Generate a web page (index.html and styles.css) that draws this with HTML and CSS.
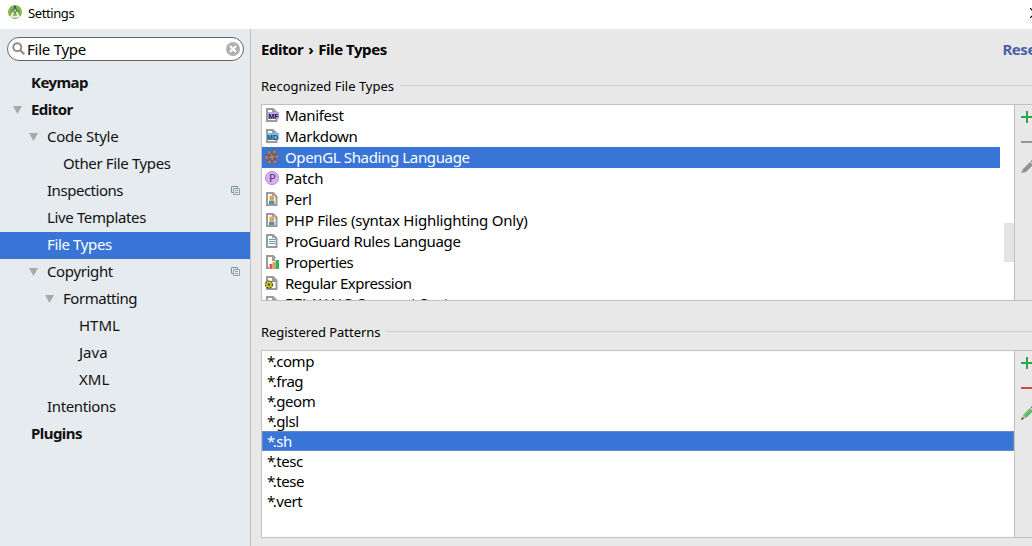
FILE: index.html
```html
<!DOCTYPE html>
<html lang="en">
<head>
<meta charset="utf-8">
<title>Settings</title>
<link rel="stylesheet" href="styles.css">
</head>
<body>
<svg width="0" height="0" class="defs">
  <defs>
    <symbol id="page" viewBox="0 0 16 16"><path fill="#fff" stroke="#9b9b9b" stroke-width="2" d="M3 2h6l3.500 3.500V14H3z"/><path fill="#9b9b9b" d="M8 2l5 5H8z"/></symbol>
    <symbol id="copy" viewBox="0 0 10 10"><path d="M2 6.500H.5v-6h6V2" fill="none" stroke="#5f9dc0"/><path d="M2.500 2.500h6v6h-6zM4 4.500h3M4 6.500h3" fill="none" stroke="#9b9b9b"/></symbol>
    <symbol id="script" viewBox="0 0 16 16"><use href="#page"/><path fill="#fff" d="M4 5h7v8H4z"/><path fill="#f0ad55" d="M5.500 4.500h4.500V10H5.500z"/><path fill="#4d94bd" d="M5 10h5.500v3H5z"/><path fill="#6d7480" d="M6 6.500h1v1H6zM8.500 6.500h1v1h-1z"/></symbol>
    <symbol id="plus" viewBox="0 0 12 12"><path d="M0 6h12M6 0v12" stroke="#29a846" stroke-width="2"/></symbol>
  </defs>
</svg>
<div class="window">
  <header class="titlebar">
    <svg class="logo" viewBox="0 0 16 16"><circle cx="8" cy="7" r="7" fill="#82b84c"/><path d="M3 6q5-6 10 0l-2 3H5z" fill="#6ea03d"/><path d="M7 1h2v3H7z" fill="#465865"/><circle cx="8" cy="5.500" r="2.200" fill="#66777b"/><circle cx="8" cy="5.500" r="1" fill="#dce8d4"/><path d="M6.500 7L2.500 15M9.500 7l4 8M4 10.500q4 3 8 0" fill="none" stroke="#eef0ed" stroke-width="1.700"/></svg>
    <span class="title">Settings</span>
    <svg class="close" viewBox="0 0 10 10"><path d="M0 0l10 10M10 0L0 10" stroke="#000" stroke-width="1.200"/></svg>
  </header>
  <div class="body">
    <aside class="sidebar">
      <div class="search">
        <svg class="lens" viewBox="0 0 14 14"><circle cx="5.300" cy="5.300" r="4" fill="none" stroke="#8d8d8d" stroke-width="2"/><path d="M8.300 8.300l4 4" stroke="#8d8d8d" stroke-width="2.200"/></svg>
        <span class="query">File Type</span>
        <svg class="clear" viewBox="0 0 14 14"><circle cx="7" cy="7" r="7" fill="#b0b0b0"/><path d="M4 4l6 6M10 4l-6 6" stroke="#fff" stroke-width="2"/></svg>
      </div>
      <nav class="tree">
        <div class="node l0 bold"><span>Keymap</span></div>
        <div class="node l0 bold open"><span>Editor</span></div>
        <div class="node l1 open"><span class="loose">Code Style</span></div>
        <div class="node l2"><span>Other File Types</span></div>
        <div class="node l1"><span class="tight">Inspections</span><svg class="copy"><use href="#copy"/></svg></div>
        <div class="node l1"><span>Live Templates</span></div>
        <div class="node l1 selected"><span>File Types</span></div>
        <div class="node l1 open"><span>Copyright</span><svg class="copy"><use href="#copy"/></svg></div>
        <div class="node l2 open"><span class="tight">Formatting</span></div>
        <div class="node l3"><span class="plain">HTML</span></div>
        <div class="node l3"><span class="plain">Java</span></div>
        <div class="node l3"><span class="plain">XML</span></div>
        <div class="node l1"><span>Intentions</span></div>
        <div class="node l0 bold"><span>Plugins</span></div>
      </nav>
    </aside>
    <main class="main">
      <div class="crumbs"><span>Editor</span><span class="chev">›</span><span>File Types</span><span class="reset">Reset</span></div>
      <div class="legend first"><span>Recognized File Types</span><i></i></div>
      <section class="panel">
        <div class="list types">
          <div class="item"><svg><use href="#page"/><path fill="#b9a4ef" d="M4 5h11v7H4z"/><text x="4.500" y="11.500" class="tag" textLength="10" lengthAdjust="spacingAndGlyphs">MF</text></svg><span>Manifest</span></div>
          <div class="item"><svg><use href="#page"/><path fill="#77bce6" d="M2 5h13v7H2z"/><text x="3" y="11.500" class="tag md" textLength="11" lengthAdjust="spacingAndGlyphs">MD</text></svg><span>Markdown</span></div>
          <div class="item selected"><svg viewBox="0 0 16 16"><g fill="#a98272" stroke="#684e50" stroke-width=".6"><circle cx="8" cy="8" r="3.500"/><circle cx="5" cy="3.300" r="2"/><circle cx="10.500" cy="3" r="2"/><circle cx="13.300" cy="7.500" r="1.900"/><circle cx="11" cy="12.700" r="2"/><circle cx="5.500" cy="13" r="2"/><circle cx="2.500" cy="8.500" r="2"/></g><path d="M5 6l6 4M10 5l-4 6" stroke="#563f46"/><path d="M7 7h2v2H7z" fill="#b38c6d"/></svg><span>OpenGL Shading Language</span></div>
          <div class="item"><svg><circle cx="8" cy="8" r="6.600" fill="#d7adf5" stroke="#bd91d9"/><text x="5" y="12" class="patch">P</text></svg><span class="loose">Patch</span></div>
          <div class="item"><svg><use href="#script"/></svg><span class="loose">Perl</span></div>
          <div class="item"><svg><use href="#script"/></svg><span class="loose">PHP Files (syntax Highlighting Only)</span></div>
          <div class="item"><svg><use href="#page"/><path fill="#fff" d="M4 5h7v8H4z"/><path d="M5 6.500h6M5 8.500h6M5 10.500h6" stroke="#599ec4"/></svg><span>ProGuard Rules Language</span></div>
          <div class="item"><svg><use href="#page"/><path fill="#fff" d="M5 9h3V7h3V4h4v11H5z"/><path fill="#e05555" d="M5.500 10h3v5h-3z"/><path fill="#ef9b5b" d="M8.500 8h3v7h-3z"/><path fill="#35b35c" d="M11.500 6h3.500v9h-3.500z"/></svg><span class="tight">Properties</span></div>
          <div class="item"><svg><use href="#page"/><circle cx="5" cy="9.500" r="3.500" fill="#dfd22e" stroke="#5e5c18" stroke-width="1.500" stroke-dasharray="2 .9"/><circle cx="5" cy="9.500" r="1.300" fill="#454b2d"/></svg><span class="tight">Regular Expression</span></div>
          <div class="item last"><svg><use href="#page"/></svg><span>RELAX NG Compact Syntax</span></div>
          <div class="thumb"></div>
        </div>
        <div class="tools">
          <svg class="plus"><use href="#plus"/></svg>
          <div class="minus"></div>
          <svg class="pencil" viewBox="0 0 14 14"><path d="M0 13l2-4 7-7 3 3-7 7z" fill="#929292"/><path d="M9.700 1.300L11 0l3 3-1.300 1.300z" fill="#777"/></svg>
        </div>
      </section>
      <div class="legend second"><span>Registered Patterns</span><i></i></div>
      <section class="panel">
        <div class="list patterns">
          <div class="pat"><span><b>*</b>.comp</span></div>
          <div class="pat"><span><b>*</b>.frag</span></div>
          <div class="pat"><span><b>*</b>.geom</span></div>
          <div class="pat"><span><b>*</b>.glsl</span></div>
          <div class="pat selected"><span><b>*</b>.sh</span></div>
          <div class="pat"><span><b>*</b>.tesc</span></div>
          <div class="pat"><span><b>*</b>.tese</span></div>
          <div class="pat"><span><b>*</b>.vert</span></div>
        </div>
        <div class="tools">
          <svg class="plus"><use href="#plus"/></svg>
          <div class="minus red"></div>
          <svg class="pencil" viewBox="0 0 14 14"><path d="M2 9l7-7 3 3-7 7z" fill="#50b75c"/><path d="M3 10l7-7" stroke="#8bd593"/><path d="M1 13l1-4 3 3z" fill="#d9b58b"/><path d="M0 14l1-3 2 2z" fill="#444"/><path d="M9.700 1.300L11 0l3 3-1.300 1.300z" fill="#666"/></svg>
        </div>
      </section>
    </main>
  </div>
</div>
</body>
</html>
```
FILE: styles.css
```css
* { box-sizing: border-box; }
body { margin: 0; font: 15px/20px "Noto Sans", "Open Sans", sans-serif; color: #111; overflow: hidden; }
svg { display: block; flex: none; }
span { white-space: nowrap; }
.defs { position: absolute; }
.window { width: 1032px; height: 546px; overflow: hidden; display: flex; flex-direction: column; }
.titlebar { height: 29px; flex: none; background: #fff; display: flex; align-items: center; padding: 0 0 3px 7px; color: #000; font-size: 13px; }
.title { letter-spacing: -.4px; }
.logo { width: 16px; height: 16px; margin-right: 5px; }
.close { width: 10px; height: 10px; margin: 0 -8px 0 auto; }
.body { flex: 1; min-height: 0; display: flex; }
.sidebar { width: 251px; flex: none; background: #e6ebef; border-right: 1px solid #c0c0c0; }
.search { height: 24px; width: 237px; margin: 8px 0 9px 7px; border: 1px solid #646464; border-radius: 12px; background: #fff; display: flex; align-items: center; padding: 0 3px 0 4px; color: #000; }
.lens { width: 14px; height: 14px; }
.query { margin-left: 1px; flex: 1; letter-spacing: -.25px; }
.clear { width: 14px; height: 14px; }
.node { height: 27px; display: flex; align-items: center; padding-bottom: 4px; letter-spacing: -.36px; }
.l0 { padding-left: 31px; }
.l1 { padding-left: 47px; }
.l2 { padding-left: 63px; }
.l3 { padding-left: 79px; }
.bold { font-weight: 700; letter-spacing: -.55px; }
.tight { letter-spacing: -.47px; }
.loose { letter-spacing: -.23px; }
.plain { letter-spacing: 0; }
.open::before { content: ""; width: 9px; height: 8px; margin: 3px 9px 0 -18px; background: #a9a9a9; clip-path: polygon(0 0, 100% 0, 50% 100%); }
.selected { background: #3875d7; color: #fff; }
.copy { width: 10px; height: 10px; margin: 2px 9px 0 auto; }
.main { flex: 1; min-width: 0; background: #e8e8e8; padding-left: 10px; color: #000; display: flex; flex-direction: column; }
.crumbs { height: 41px; flex: none; display: flex; align-items: center; font-weight: 700; letter-spacing: -.45px; padding-bottom: 2px; }
.chev { margin: 0 5px; }
.reset { color: #4a5fa5; margin-left: auto; margin-right: -10px; }
.legend { flex: none; display: flex; align-items: center; font-size: 13px; }
.legend i { flex: 1; height: 1px; background: #cdcdcd; margin-left: 6px; }
.first { height: 31px; margin-bottom: 3px; }
.second { height: 31px; margin: 15px 0 3px; letter-spacing: -.05px; }
.panel { flex: none; display: flex; }
.list { width: 754px; flex: none; background: #fff; border: 1px solid #c0c0c0; overflow: hidden; position: relative; }
.types { height: 197px; }
.patterns { height: 188px; }
.item { height: 21px; width: 738px; display: flex; align-items: center; padding: 0 0 2px 2px; letter-spacing: -.36px; }
.item svg { width: 16px; height: 16px; margin-right: 5px; }
.item.last { padding-bottom: 4px; }
.tag { font: 700 8px "Liberation Sans", sans-serif; letter-spacing: 0; fill: #24162f; }
.md { fill: #284b64; }
.patch { font: 11px "DejaVu Sans", sans-serif; fill: #503f5d; }
.thumb { position: absolute; right: 0; top: 118px; width: 10px; height: 39px; background: #e3e3e3; }
.pat { height: 20px; display: flex; align-items: center; padding-left: 5px; letter-spacing: -.45px; }
.pat b { font-weight: 400; letter-spacing: -2.600px; }
.pat.selected { border: 1px solid #6688c5; padding-left: 4px; }
.tools { flex: 1; min-width: 0; overflow: hidden; border-top: 1px solid #c0c0c0; border-bottom: 1px solid #c0c0c0; padding: 6px 0 0 6px; }
.plus { width: 12px; height: 12px; }
.minus { width: 12px; height: 2px; background: #939393; margin: 18px 0 17px; }
.red { background: #cc4a3e; }
.pencil { width: 14px; height: 14px; }
```
